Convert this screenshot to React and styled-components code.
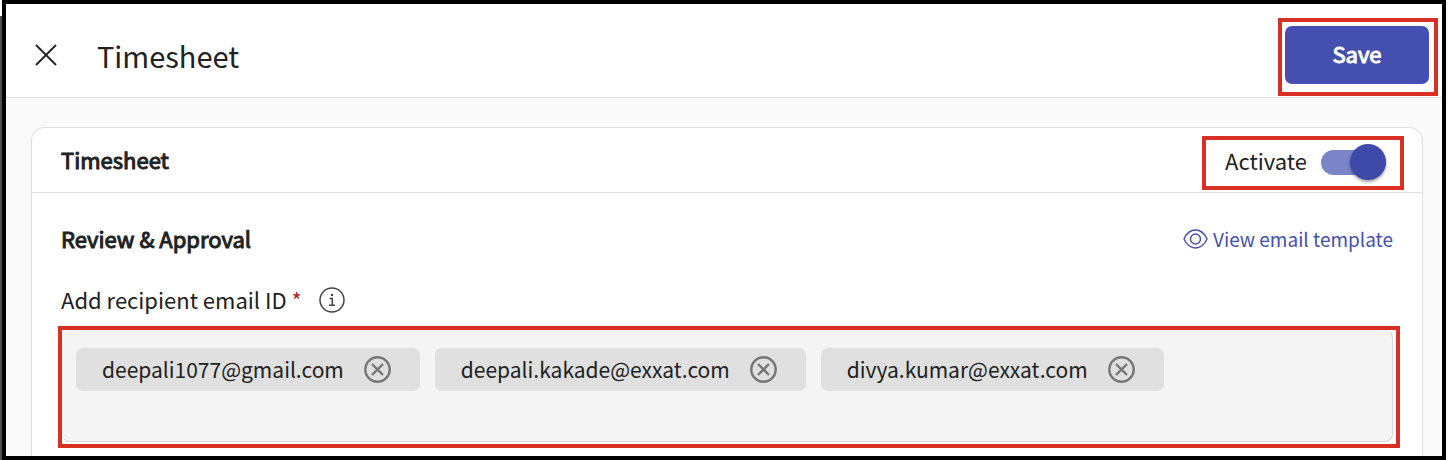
import React, {useState} from "react";
import styled, {createGlobalStyle, css} from 'styled-components';

const colors = {
  primary: '#454fb0',
  text: '#212121',
  line: '#e0e0e0',
  highlight: '#d93025',
};

const GlobalStyle = createGlobalStyle`
  * {
    box-sizing: border-box;
  }

  body {
    margin: 0;
    background: #fafafa;
    font-family: "Noto Sans CJK SC", "Noto Sans", sans-serif;
    color: ${colors.text};
  }

  h1, h2, h3 {
    margin: 0;
  }

  button, input {
    font-family: inherit;
    color: inherit;
  }
`;

const Backdrop = styled.div`
  padding: 0 2px;
  background: linear-gradient(#fff 16px, #4f4f4f 16px) left / 2px 100% no-repeat;
`;

const Frame = styled.div`
  display: flex;
  flex-direction: column;
  min-height: 100vh;
  border: 4px solid #000;
  background: #fafafa;
`;

const Highlight = styled.div`
  display: flex;
  align-items: center;
  border: 4px solid ${colors.highlight};
  padding: ${({$padding}) => $padding || '0'};
`;

const PageHeader = styled.header`
  display: flex;
  align-items: center;
  padding: 14px 4px 1px 28px;
  border-bottom: 1px solid ${colors.line};
  background: #fff;
`;

const IconButton = styled.button`
  display: flex;
  padding: 0;
  border: 0;
  background: none;
  cursor: pointer;
`;

const CloseButton = styled(IconButton)`
  padding-bottom: 4px;
`;

const PageTitle = styled.h1`
  flex: 1;
  padding: 0 0 4px 39px;
  font-size: 29px;
  line-height: 40px;
  font-weight: 400;
`;

const SaveButton = styled.button`
  width: 144px;
  height: 58px;
  padding: 0 0 4px;
  border: 0;
  border-radius: 7px;
  background: ${colors.primary};
  color: #fff;
  font-size: 22px;
  line-height: 32px;
  -webkit-text-stroke: 1px #fff;
  cursor: pointer;
`;

const Card = styled.section`
  flex: 1;
  margin: 29px 19px 0 25px;
  border: 1px solid ${colors.line};
  border-bottom: 0;
  border-radius: 14px 14px 0 0;
  background: #fff;
`;

const CardHeader = styled.div`
  display: flex;
  align-items: center;
  justify-content: space-between;
  padding: 8px 18px 2px 29px;
  border-bottom: 1px solid ${colors.line};
`;

const heading = css`
  font-size: 22px;
  line-height: 32px;
  font-weight: 400;
  -webkit-text-stroke: 1px ${colors.text};
`;

const CardTitle = styled.h2`
  ${heading}
  padding-bottom: 8px;
`;

const SectionTitle = styled.h3`
  ${heading}
  padding-bottom: 2px;
`;

const SwitchLabel = styled.label`
  display: flex;
  align-items: center;
  gap: 14px;
  height: 46px;
  padding-bottom: 2px;
  font-size: 22px;
  line-height: 32px;
  cursor: pointer;
`;

const SwitchText = styled.span`
  padding-bottom: 4px;
`;

const Switch = styled.input`
  display: flex;
  align-items: center;
  appearance: none;
  width: 65px;
  height: 25px;
  margin: 0;
  border-radius: 13px;
  background: ${({checked}) => checked ? '#7b84c6' : '#bdbdbd'};
  cursor: pointer;

  &::before {
    content: '';
    width: 36px;
    height: 36px;
    margin-left: ${({checked}) => checked ? '29px' : '0'};
    border-radius: 50%;
    background: ${({checked}) => checked ? '#3f49aa' : '#fafafa'};
    box-shadow: 0 2px 3px rgba(0, 0, 0, 0.35);
  }
`;

const CardBody = styled.div`
  padding: 29px 22px 8px 26px;
`;

const SectionRow = styled.div`
  display: flex;
  align-items: center;
  justify-content: space-between;
  padding: 0 7px 0 3px;
`;

const TemplateLink = styled.a`
  display: flex;
  align-items: center;
  gap: 5px;
  color: ${colors.primary};
  font-size: 19px;
  line-height: 32px;
  text-decoration: none;
`;

const FieldLabelRow = styled.div`
  display: flex;
  align-items: center;
  padding: 27px 3px 9px;
`;

const FieldLabel = styled.label`
  padding-bottom: 2px;
  font-size: 22px;
  line-height: 32px;
`;

const Required = styled.span`
  color: #b3261e;
`;

const InfoButton = styled(IconButton)`
  margin-left: 17px;
`;

const EmailField = styled.div`
  flex: 1;
  display: flex;
  flex-wrap: wrap;
  align-items: flex-start;
  gap: 15px;
  min-height: 112px;
  padding: 18px 14px;
  border: solid #d2d2d8;
  border-width: 0 1px 1px 0;
  border-radius: 8px;
  background: #f4f4f4;
`;

const Chip = styled.span`
  display: flex;
  align-items: center;
  gap: 20px;
  height: 43px;
  padding: 0 29px 0 26px;
  border-radius: 7px;
  background: #e0e0e0;
  font-size: 21px;
  line-height: 32px;
`;

const ChipText = styled.span`
  padding-bottom: 2px;
`;

const EmailInput = styled.input`
  flex: 1;
  min-width: 80px;
  height: 43px;
  padding: 0;
  border: 0;
  outline: 0;
  background: none;
  font-size: 21px;
`;

const CloseIcon = () => (
  <svg width="24" height="24" viewBox="0 0 24 24" fill="none" stroke="#212121" strokeWidth="1.8">
    <path d="M2 2l20 20M22 2L2 22" />
  </svg>
);

const EyeIcon = () => (
  <svg width="25" height="20" viewBox="0 0 25 20" fill="none" stroke={colors.primary} strokeWidth="1.4">
    <path d="M1 10C3.6 4.2 7.8 1 12.5 1S21.4 4.2 24 10C21.4 15.8 17.2 19 12.5 19S3.6 15.8 1 10Z" />
    <circle cx="12.5" cy="10" r="5" />
  </svg>
);

const InfoIcon = () => (
  <svg width="26" height="26" viewBox="0 0 26 26" fill="none" stroke="#444" strokeWidth="1.5">
    <circle cx="13" cy="13" r="12" />
    <path d="M10.5 11.5H13.3V18M10 18.2H16" />
    <circle cx="13" cy="8" r="1.2" fill="#444" stroke="none" />
  </svg>
);

const RemoveIcon = () => (
  <svg width="27" height="27" viewBox="0 0 27 27" fill="none" stroke="#757575" strokeWidth="2.4">
    <circle cx="13.5" cy="13.5" r="12.2" />
    <path d="M8 8l11 11M19 8L8 19" />
  </svg>
);

const App = () => {
  const [active, setActive] = useState(true)
  const [email, setEmail] = useState('')
  const [recipients, setRecipients] = useState([
    'deepali1077@gmail.com',
    'deepali.kakade@exxat.com',
    'divya.kumar@exxat.com',
  ])

  const addRecipient = (e) => {
    if (e.key === 'Enter' && email) {
      setRecipients([...recipients, email])
      setEmail('')
    }
  }

  return (
    <Backdrop>
      <GlobalStyle />
      <Frame>
        <PageHeader>
          <CloseButton type="button" aria-label="Close">
            <CloseIcon />
          </CloseButton>
          <PageTitle>Timesheet</PageTitle>
          <Highlight $padding="4px 5px 8px 3px">
            <SaveButton type="button">Save</SaveButton>
          </Highlight>
        </PageHeader>
        <Card>
          <CardHeader>
            <CardTitle>Timesheet</CardTitle>
            <Highlight $padding="0 14px 0 19px">
              <SwitchLabel>
                <SwitchText>Activate</SwitchText>
                <Switch
                  type="checkbox"
                  role="switch"
                  checked={active}
                  onChange={(e) => setActive(e.target.checked)}
                />
              </SwitchLabel>
            </Highlight>
          </CardHeader>
          <CardBody>
            <SectionRow>
              <SectionTitle>Review &amp; Approval</SectionTitle>
              <TemplateLink href="#template">
                <EyeIcon />
                View email template
              </TemplateLink>
            </SectionRow>
            <FieldLabelRow>
              <FieldLabel htmlFor="recipient">
                Add recipient email ID <Required>*</Required>
              </FieldLabel>
              <InfoButton type="button" aria-label="More information">
                <InfoIcon />
              </InfoButton>
            </FieldLabelRow>
            <Highlight $padding="0 3px 2px 0">
              <EmailField>
                {recipients.map((recipient) => (
                  <Chip key={recipient}>
                    <ChipText>{recipient}</ChipText>
                    <IconButton
                      type="button"
                      aria-label={`Remove ${recipient}`}
                      onClick={() => setRecipients(recipients.filter((r) => r !== recipient))}
                    >
                      <RemoveIcon />
                    </IconButton>
                  </Chip>
                ))}
                <EmailInput
                  id="recipient"
                  type="email"
                  value={email}
                  onChange={(e) => setEmail(e.target.value)}
                  onKeyDown={addRecipient}
                />
              </EmailField>
            </Highlight>
          </CardBody>
        </Card>
      </Frame>
    </Backdrop>
  )
}

export default App
